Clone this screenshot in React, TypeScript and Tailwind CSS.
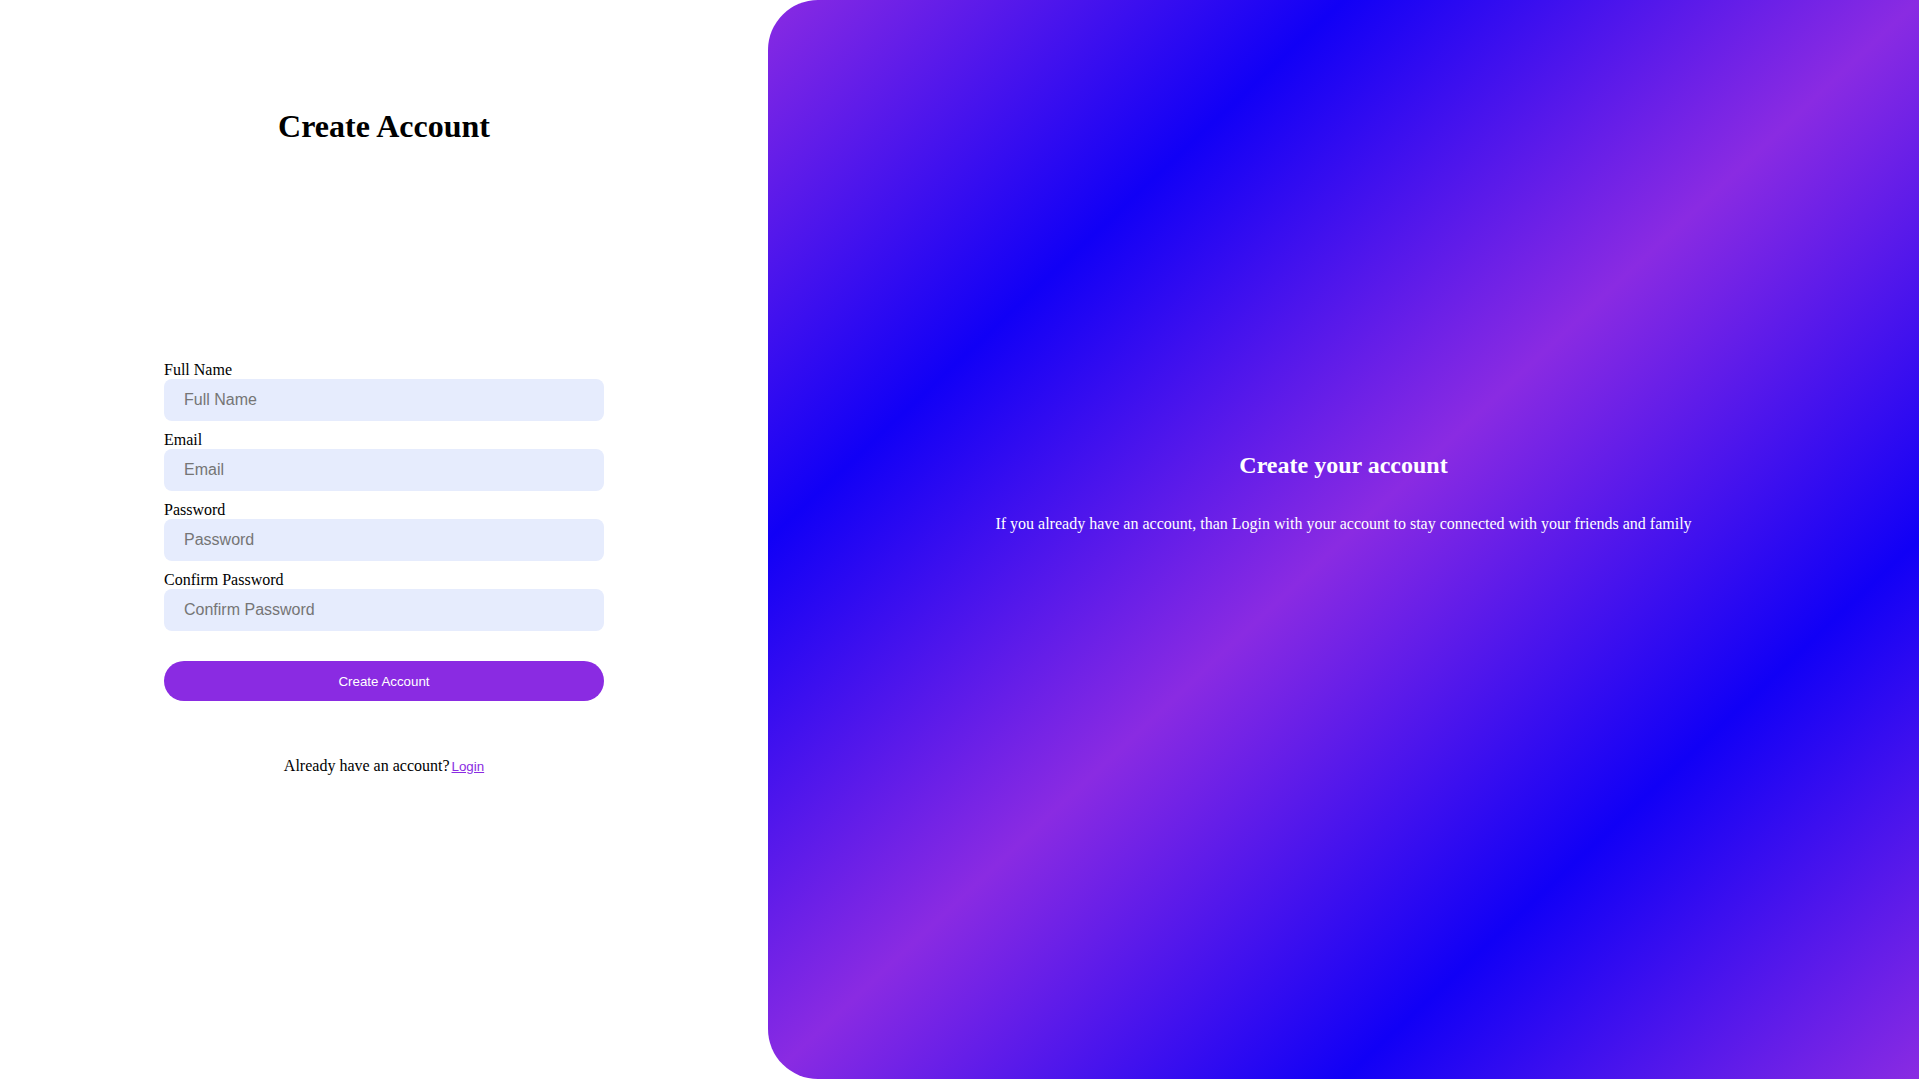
export default function App() {
  return (
    <main className="flex w-full h-[1079px] bg-white overflow-hidden font-['Liberation_Serif',serif]">
      <section className="w-[768px] shrink-0 flex flex-col items-center">
        <h1 className="mt-[108px] text-[32px] leading-[36px] font-bold text-black">Create Account</h1>

        <form className="mt-[217px] w-[440px] flex flex-col">
          {["Full Name", "Email", "Password", "Confirm Password"].map((label) => (
            <div key={label} className="flex flex-col mb-[10px]">
              <label className="text-[16px] leading-[18px] text-black">{label}</label>
              <input
                type={label.includes("Password") ? "password" : "text"}
                placeholder={label}
                className="h-[42px] w-full rounded-lg bg-[#e6ecfd] px-5 text-[16px] font-['Liberation_Sans',Arial,sans-serif] text-black placeholder:text-[#757575] outline-none"
              />
            </div>
          ))}
          <button
            type="button"
            className="mt-[20px] h-10 w-full rounded-full bg-[#8a2be2] pt-[2px] text-white text-[13.33px] font-['Liberation_Sans',Arial,sans-serif]"
          >
            Create Account
          </button>
        </form>

        <p className="mt-[56px] text-[16px] leading-[18px] text-black">
          Already have an account?
          <a
            href="#"
            className="ml-[2px] text-[13.33px] font-['Liberation_Sans',Arial,sans-serif] text-[#8a2be2] underline"
          >
            Login
          </a>
        </p>
      </section>

      <section className="flex-1 rounded-l-[50px] bg-[linear-gradient(to_bottom_right,#8a2be2,#1100f6,#8a2be2,#1100f6,#8a2be2)] flex flex-col items-center pt-[452px] text-white">
        <h2 className="text-[24px] leading-[27px] font-bold">Create your account</h2>
        <p className="mt-[36px] text-[16px] leading-[18px]">
          If you already have an account, than Login with your account to stay connected with your friends and family
        </p>
      </section>
    </main>
  );
}
